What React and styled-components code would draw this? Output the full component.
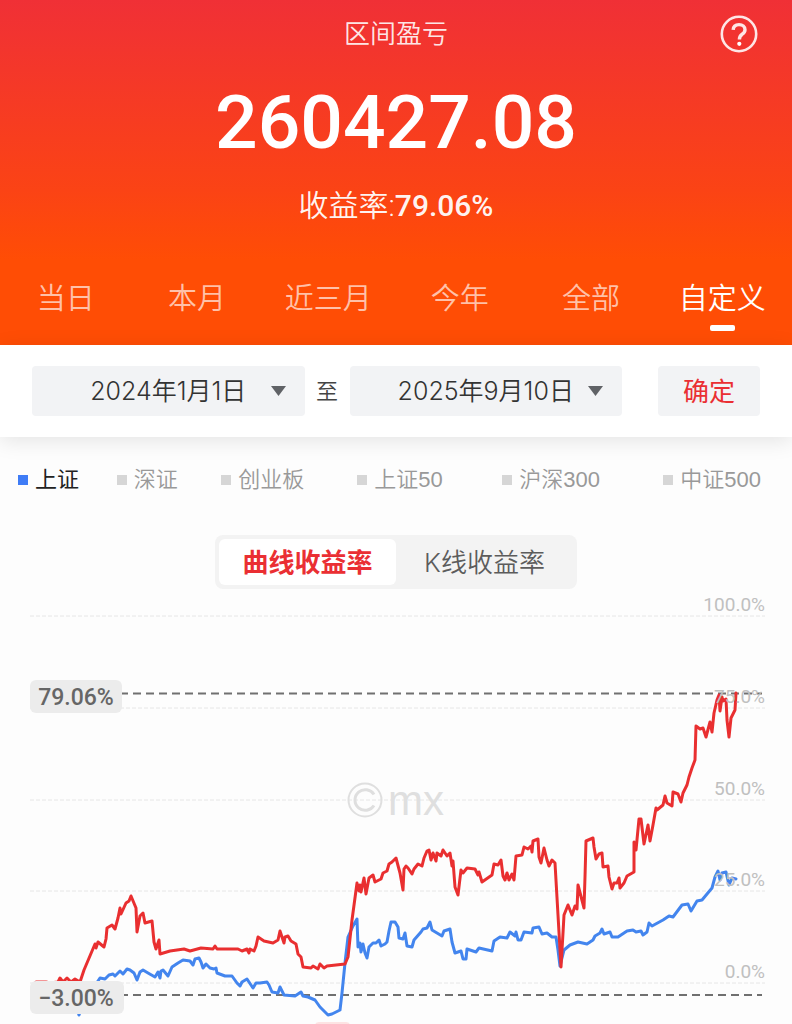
import React, { useState } from "react";
import styled, { createGlobalStyle } from "styled-components";

const CJK = '"Noto Sans CJK SC", sans-serif';
const TEXT = `Inter, ${CJK}`;
const NUMERIC = `Roboto, ${CJK}`;

const GlobalStyle = createGlobalStyle`
  *, *::before, *::after { box-sizing: border-box; }
  body {
    margin: 0;
    background: #fdfdfd;
    font-family: ${TEXT};
    color: #333;
    overflow-x: hidden;
  }
  button, select { font: inherit; color: inherit; border: 0; margin: 0; padding: 0; background: none; cursor: pointer; }
`;

const Header = styled.header`
  color: #fff;
  background: linear-gradient(180deg, #f03036 0, #fb4315 190px, #ff4d05 260px);
`;

const TitleRow = styled.div`
  display: grid;
  grid-template-columns: 1fr auto 1fr;
  align-items: center;
  height: 68px;
  padding: 0 34px;
`;

const Title = styled.h1`
  grid-column: 2;
  margin: 0;
  font-size: 26px;
  font-weight: 350;
  line-height: 36px;
  color: rgba(255, 255, 255, 0.9);
`;

const HelpButton = styled.button`
  justify-self: end;
  display: flex;
`;

const Amount = styled.p`
  margin: 0;
  font-family: ${NUMERIC};
  font-size: 75px;
  font-weight: 500;
  line-height: 108px;
  text-align: center;
`;

const Rate = styled.p`
  margin: 0;
  font-family: ${NUMERIC};
  font-size: 30px;
  font-weight: 350;
  line-height: 60px;
  text-align: center;
  color: rgba(255, 255, 255, 0.95);

  strong { font-weight: 500; }
`;

const Tabs = styled.nav`
  display: flex;
  padding: 38px 4px 14px 0;
`;

const Tab = styled.button`
  flex: 1;
  display: flex;
  flex-direction: column;
  align-items: center;
  gap: 1px;
  font-size: 29px;
  font-weight: 350;
  line-height: 50px;
  color: ${(p) => (p.$active ? "#fff" : "rgba(255, 255, 255, 0.66)")};

  &::after {
    content: "";
    width: 25px;
    height: 6px;
    border-radius: 2px;
    background: ${(p) => (p.$active ? "#fff" : "transparent")};
  }
`;

const RangeBar = styled.form`
  display: flex;
  align-items: center;
  height: 92px;
  padding: 0 32px;
  background: #fff;
  box-shadow: 0 4px 20px rgba(0, 0, 0, 0.1);
`;

const DateField = styled.div`
  flex: 1;
  display: grid;
  align-items: center;
  height: 50px;
  border-radius: 4px;
  background: #f2f3f5;

  > * { grid-area: 1 / 1; }
`;

const DateSelect = styled.select`
  appearance: none;
  width: 100%;
  height: 50px;
  font-size: 25px;
  font-weight: 350;
  text-align: center;
  text-align-last: center;
  color: #333;
`;

const Caret = styled.svg`
  justify-self: end;
  margin-right: 19px;
  pointer-events: none;
`;

const RangeJoin = styled.span`
  width: 45px;
  padding-bottom: 4px;
  font-size: 22px;
  font-weight: 350;
  text-align: center;
  color: #444;
`;

const ConfirmButton = styled.button`
  width: 102px;
  height: 50px;
  margin-left: 36px;
  padding-bottom: 4px;
  border-radius: 4px;
  background: #f2f3f5;
  font-size: 26px;
  color: #ea2f33;
`;

const Legend = styled.div`
  display: grid;
  grid-template-columns: 98fr 104fr 135fr 144fr 160fr auto;
  padding: 28px 31px 0 18px;
`;

const LegendItem = styled.button`
  display: flex;
  align-items: center;
  gap: 7px;
  font-family: "Liberation Sans", ${CJK};
  font-size: 22px;
  font-weight: ${(p) => (p.$active ? 400 : 350)};
  line-height: 30px;
  white-space: nowrap;
  color: ${(p) => (p.$active ? "#222" : "#999")};

  &::before {
    content: "";
    width: 10px;
    height: 10px;
    background: ${(p) => (p.$active ? "#3f7cf6" : "#d6d6d6")};
  }
`;

const ModeSwitch = styled.div`
  display: flex;
  width: 362px;
  margin: 40px auto 0;
  padding: 4px;
  border-radius: 8px;
  background: #f3f3f3;
`;

const ModeButton = styled.button`
  flex: 1;
  height: 46px;
  padding-bottom: 4px;
  border-radius: 6px;
  font-size: 26px;
  font-weight: ${(p) => (p.$active ? 700 : 350)};
  color: ${(p) => (p.$active ? "#ea2f33" : "#5c5c5c")};
  background: ${(p) => (p.$active ? "#fff" : "transparent")};
`;

const Chart = styled.svg`
  display: block;
  width: 100%;
  height: auto;
`;

const AxisLabel = styled.text`
  font-family: ${NUMERIC};
  font-size: 19px;
  fill: #c0c0c0;
  text-anchor: end;
`;

const BadgeLabel = styled.text`
  font-family: ${NUMERIC};
  font-size: 23px;
  font-weight: 500;
  fill: #666;
  text-anchor: middle;
`;

const Watermark = styled.text`
  font-family: "Liberation Sans", sans-serif;
  font-size: 42px;
  fill: #dfdfdf;
`;

const TABS = ["当日", "本月", "近三月", "今年", "全部", "自定义"];
const INDEXES = ["上证", "深证", "创业板", "上证50", "沪深300", "中证500"];
const MODES = ["曲线收益率", "K线收益率"];
const GRID = [
  ["100.0%", 616],
  ["75.0%", 708],
  ["50.0%", 800],
  ["25.0%", 891],
  ["0.0%", 983],
];

const ACCOUNT =
  "36,982 46,982 50,983 58,982 60,978 63,982 67,978 71,982 75,979 80,982 84,970 95,944 96,948 98,942 104,947 106,939 107,928 112,925 115,929 118,918 120,908 121,914 126,903 129,901 131,896 136,908 137,932 140,916 143,913 145,923 152,921 154,942 156,949 159,940 160,954 170,951 184,949 190,951 201,948 213,949 215,946 217,949 238,949 242,951 247,949 249,953 250,949 254,951 256,946 258,937 264,941 273,943 278,940 280,931 284,943 285,937 288,936 291,941 296,944 298,954 301,957 303,967 311,968 313,966 318,969 320,964 324,968 327,966 345,964 348,957 352,920 357,883 359,891 360,885 361,892 364,878 366,894 369,878 373,875 375,882 381,879 383,873 387,871 389,864 392,862 396,858 400,873 403,890 404,869 406,866 408,868 412,874 414,869 418,864 422,866 424,858 427,851 429,850 431,860 433,853 436,861 437,853 441,856 443,850 447,856 450,853 452,866 453,861 455,887 458,895 461,870 463,873 467,868 475,869 478,875 479,872 482,882 492,875 494,864 498,865 501,860 503,876 505,880 507,873 509,880 512,874 514,880 516,856 522,855 524,847 528,849 531,846 532,852 533,841 538,839 539,857 541,863 544,848 547,860 549,866 552,860 555,863 561,967 563,933 564,915 568,905 572,915 575,906 577,909 578,885 584,908 585,877 586,841 593,838 594,847 596,859 599,854 602,853 603,867 608,866 609,877 612,889 614,883 617,883 619,878 620,888 624,883 627,876 634,872 634,842 636,850 639,819 641,819 644,844 648,825 650,841 653,825 656,808 657,810 663,805 665,796 667,803 672,806 673,792 678,794 681,802 683,793 687,785 689,777 692,768 695,760 696,726 700,729 703,728 706,737 710,722 712,732 714,713 717,700 719,695 720,711 722,697 723,701 726,699 727,720 729,737 731,718 735,710 736,693";

const INDEX =
  "76,1004 79,1015 84,1000 92,992 98,981 100,978 105,979 109,975 113,974 115,976 120,971 123,974 127,969 130,970 134,973 137,980 140,972 143,970 148,973 155,977 158,972 160,978 161,971 163,970 168,976 172,967 178,963 183,960 190,961 193,965 195,959 199,958 201,962 203,968 206,964 210,968 214,969 216,968 217,973 225,976 232,976 237,983 240,986 242,982 247,979 253,988 256,983 260,983 267,982 269,985 272,992 278,993 280,987 284,995 295,996 301,992 303,996 308,997 315,1000 320,1007 328,1015 332,1014 340,1010 342,993 345,963 348,937 353,926 357,919 358,947 360,943 361,952 363,944 365,953 367,958 369,947 373,943 376,943 379,940 381,946 385,944 387,942 389,931 391,922 395,922 398,927 399,938 403,939 405,933 407,946 412,947 414,940 421,932 423,929 427,928 430,922 432,930 437,933 442,936 444,931 450,929 452,942 455,953 461,951 463,959 466,959 467,949 476,952 479,948 492,951 494,941 500,937 507,938 510,932 515,936 516,932 518,940 521,940 524,932 532,933 533,928 539,927 542,934 547,933 552,937 556,937 558,950 560,966 564,950 570,945 578,942 587,944 593,940 595,936 600,933 602,929 604,934 610,932 612,937 618,937 627,931 633,930 636,932 641,931 643,935 647,932 649,923 652,926 663,920 669,916 673,917 682,905 688,904 691,911 697,901 702,900 712,888 715,877 718,871 720,880 722,873 726,872 729,885 732,878 736,879";

function DateRange({ label, value }) {
  return (
    <DateField>
      <DateSelect aria-label={label} defaultValue={value}>
        <option>{value}</option>
      </DateSelect>
      <Caret width="15" height="10" viewBox="0 0 15 10" aria-hidden="true">
        <path d="M0 0H15L7.5 10Z" fill="#606266" />
      </Caret>
    </DateField>
  );
}

function ReturnChart() {
  return (
    <Chart viewBox="0 589 792 435" role="img" aria-label="收益率曲线">
      {GRID.map(([label, y]) => (
        <line key={label} x1="30" x2="765" y1={y} y2={y} stroke="#e6e6e6" strokeWidth="1" strokeDasharray="4 2" />
      ))}
      <Watermark x="388" y="815">mx</Watermark>
      <g fill="none" stroke="#dfdfdf" strokeWidth="2">
        <circle cx="365" cy="800" r="16.5" />
        <path d="M374 794.5A10.3 10.3 0 1 0 374 805.5" strokeWidth="3" />
      </g>
      <g stroke="#707070" strokeWidth="2" strokeDasharray="8 5">
        <line x1="120" x2="762" y1="693.5" y2="693.5" />
        <line x1="120" x2="762" y1="995" y2="995" />
      </g>
      <g fill="none" strokeWidth="3" strokeLinejoin="round" strokeLinecap="round">
        <polyline points={INDEX} stroke="#4385ee" />
        <polyline points={ACCOUNT} stroke="#e92f30" />
      </g>
      {GRID.map(([label, y]) => (
        <AxisLabel key={label} x="765" y={y - 5}>{label}</AxisLabel>
      ))}
      <rect x="30" y="680" width="92" height="33" rx="6" fill="#ececec" />
      <BadgeLabel x="76" y="705">79.06%</BadgeLabel>
      <rect x="30" y="981" width="94" height="33" rx="6" fill="#ececec" />
      <BadgeLabel x="76" y="1006">−3.00%</BadgeLabel>
      <rect x="315" y="1022" width="35" height="20" rx="4" fill="#fde3e3" />
    </Chart>
  );
}

export default function App() {
  const [tab, setTab] = useState("自定义");
  const [index, setIndex] = useState("上证");
  const [mode, setMode] = useState("曲线收益率");

  return (
    <>
      <GlobalStyle />
      <Header>
        <TitleRow>
          <Title>区间盈亏</Title>
          <HelpButton type="button" aria-label="帮助">
            <svg width="38" height="38" viewBox="0 0 38 38" fill="none" stroke="#fff" strokeOpacity="0.88">
              <circle cx="19" cy="19" r="17.2" strokeWidth="2.6" />
              <path d="M13.2 14.8C13.4 11.3 15.6 9.6 19 9.6C22.6 9.6 25 11.600 25 14.700C25 17.2 23.500 18.300 21.900 19.500C20.200 20.700 19.400 21.700 19.400 24.6" strokeWidth="3.4" />
              <circle cx="19.300" cy="28.800" r="2.1" fill="#fff" stroke="none" />
            </svg>
          </HelpButton>
        </TitleRow>
        <Amount>260427.08</Amount>
        <Rate>收益率:<strong>79.06%</strong></Rate>
        <Tabs>
          {TABS.map((t) => (
            <Tab key={t} type="button" $active={t === tab} onClick={() => setTab(t)}>{t}</Tab>
          ))}
        </Tabs>
      </Header>
      <RangeBar onSubmit={(e) => e.preventDefault()}>
        <DateRange label="开始日期" value="2024年1月1日" />
        <RangeJoin>至</RangeJoin>
        <DateRange label="结束日期" value="2025年9月10日" />
        <ConfirmButton type="submit">确定</ConfirmButton>
      </RangeBar>
      <main>
        <Legend>
          {INDEXES.map((i) => (
            <LegendItem key={i} type="button" $active={i === index} onClick={() => setIndex(i)}>{i}</LegendItem>
          ))}
        </Legend>
        <ModeSwitch>
          {MODES.map((m) => (
            <ModeButton key={m} type="button" $active={m === mode} onClick={() => setMode(m)}>{m}</ModeButton>
          ))}
        </ModeSwitch>
        <ReturnChart />
      </main>
    </>
  );
}
